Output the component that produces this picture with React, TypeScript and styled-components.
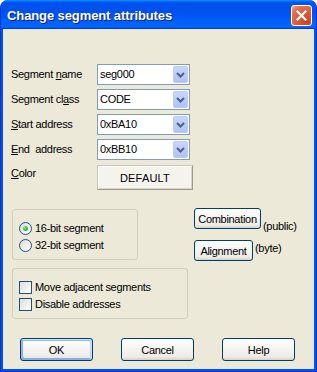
import React from 'react';
import styled, { createGlobalStyle } from 'styled-components';

const GlobalStyle = createGlobalStyle`
  html, body {
    margin: 0;
    padding: 0;
    background: #ffffff;
  }
  * {
    box-sizing: border-box;
  }
`;

const fields = [
  { key: 'name', pre: 'Segment ', hot: 'n', post: 'ame', value: 'seg000' },
  { key: 'class', pre: 'Segment cl', hot: 'a', post: 'ss', value: 'CODE' },
  { key: 'start', pre: '', hot: 'S', post: 'tart address', value: '0xBA10' },
  { key: 'end', pre: '', hot: 'E', post: 'nd\u00a0\u00a0address', value: '0xBB10' },
];

const App = () => {
  return (
    <>
      <GlobalStyle />
      <Window>
        <TitleBar>
          <TitleText>Change segment attributes</TitleText>
          <CloseButton>
            <svg width="11" height="11" viewBox="0 0 11 11">
              <path
                d="M1.5 1.5 L9.5 9.5 M9.5 1.5 L1.5 9.5"
                stroke="#ffffff"
                strokeWidth="2.2"
                strokeLinecap="square"
              />
            </svg>
          </CloseButton>
        </TitleBar>

        <Body>
          <FormGrid>
            {fields.map((f) => (
              <React.Fragment key={f.key}>
                <FieldLabel>
                  {f.pre}
                  <u>{f.hot}</u>
                  {f.post}
                </FieldLabel>
                <Combo>
                  <ComboValue>{f.value}</ComboValue>
                  <ComboArrow>
                    <svg width="9" height="6" viewBox="0 0 9 6">
                      <path
                        d="M1 1 L4.5 4.5 L8 1"
                        fill="none"
                        stroke="#4d6185"
                        strokeWidth="2"
                      />
                    </svg>
                  </ComboArrow>
                </Combo>
              </React.Fragment>
            ))}
            <FieldLabel $top>
              <u>C</u>olor
            </FieldLabel>
            <ColorButton>DEFAULT</ColorButton>
          </FormGrid>

          <LowerArea>
            <GroupBox $width={126}>
              <OptionRow>
                <RadioMark $checked />
                <OptionText>16-bit segment</OptionText>
              </OptionRow>
              <OptionRow>
                <RadioMark />
                <OptionText>32-bit segment</OptionText>
              </OptionRow>
            </GroupBox>

            <SideColumn>
              <SideRow>
                <SideButton $width={67}>Combination</SideButton>
                <SideNote $offset={12}>(public)</SideNote>
              </SideRow>
              <SideRow>
                <SideButton $width={59}>Alignment</SideButton>
                <SideNote $offset={2}>(byte)</SideNote>
              </SideRow>
            </SideColumn>

            <GroupBox $width={176}>
              <OptionRow>
                <CheckMark />
                <OptionText>
                  Move ad<u>j</u>acent segments
                </OptionText>
              </OptionRow>
              <OptionRow>
                <CheckMark />
                <OptionText>Disable addresses</OptionText>
              </OptionRow>
            </GroupBox>
          </LowerArea>

          <ButtonRow>
            <DialogButton $isDefault>OK</DialogButton>
            <DialogButton>Cancel</DialogButton>
            <DialogButton>Help</DialogButton>
          </ButtonRow>
        </Body>
      </Window>
    </>
  );
};

export default App;

const Window = styled.div`
  width: 317px;
  height: 372px;
  display: flex;
  flex-direction: column;
  background: #0055e5;
  border: 1px solid #0831d9;
  border-top: none;
  border-radius: 8px 8px 0 0;
  overflow: hidden;
  font-family: 'Liberation Sans', Arial, sans-serif;
  font-size: 11px;
  letter-spacing: -0.3px;
  color: #000000;
`;

const TitleBar = styled.div`
  height: 29px;
  flex: none;
  display: flex;
  align-items: center;
  justify-content: space-between;
  padding: 1px 4px 0 6px;
  background: linear-gradient(
    180deg,
    #0997ff 0%,
    #0053ee 8%,
    #0050ee 40%,
    #0066ff 88%,
    #0066ff 93%,
    #005bff 95%,
    #003dd7 96%,
    #003dd7 100%
  );
`;

const TitleText = styled.div`
  font-family: 'Liberation Sans', Arial, sans-serif;
  font-weight: bold;
  font-size: 13px;
  color: #ffffff;
  text-shadow: 1px 1px #0a1883;
  letter-spacing: -0.1px;
`;

const CloseButton = styled.div`
  width: 21px;
  height: 21px;
  display: flex;
  align-items: center;
  justify-content: center;
  border: 1px solid #ffffff;
  border-radius: 3px;
  background: radial-gradient(
    circle at 80% 85%,
    #c9441d 0%,
    #dc5a33 45%,
    #e4714f 75%,
    #f0a58c 100%
  );
`;

const Body = styled.div`
  flex: 1;
  margin: 0 2px 2px;
  background: #ece9d8;
  padding: 35px 0 0 8px;
  display: flex;
  flex-direction: column;
`;

const FormGrid = styled.div`
  display: grid;
  grid-template-columns: 86px 93px;
  grid-template-rows: repeat(4, 21px) 26px;
  row-gap: 4px;
  align-items: center;
`;

const FieldLabel = styled.div<{ $top?: boolean }>`
  line-height: 13px;
  white-space: nowrap;
  align-self: ${({ $top }) => ($top ? 'start' : 'center')};
  margin-top: ${({ $top }) => ($top ? '3px' : '0')};
`;

const Combo = styled.div`
  height: 21px;
  display: flex;
  align-items: center;
  justify-content: space-between;
  background: #ffffff;
  border: 1px solid #7f9db9;
  padding: 0 1px 0 2px;
`;

const ComboValue = styled.span`
  line-height: 13px;
`;

const ComboArrow = styled.div`
  width: 15px;
  height: 17px;
  display: flex;
  align-items: center;
  justify-content: center;
  border-radius: 2px;
  background: linear-gradient(180deg, #c6d6fc 0%, #b9cbf6 60%, #aec2f2 100%);
  border: 1px solid #bccdf6;
`;

const ColorButton = styled.div`
  width: 96px;
  height: 25px;
  margin-top: 1px;
  align-self: start;
  display: flex;
  align-items: center;
  justify-content: center;
  letter-spacing: 0.2px;
  background: #f4f3ee;
  border: 1px solid #c9c6b8;
  border-right-color: #9d9a8f;
  border-bottom-color: #9d9a8f;
  box-shadow: inset 1px 1px #ffffff, inset -1px -1px #d8d4c6;
`;

const LowerArea = styled.div`
  margin: 19px 0 0 1px;
  display: grid;
  grid-template-columns: 176px auto;
  column-gap: 6px;
  row-gap: 7px;
  align-items: start;
`;

const GroupBox = styled.div<{ $width: number }>`
  width: ${({ $width }) => $width}px;
  height: 51px;
  border: 1px solid #d0d0bf;
  border-radius: 3px;
  padding: 12px 0 0 6px;
  display: flex;
  flex-direction: column;
  gap: 4px;
`;

const OptionRow = styled.div`
  height: 13px;
  display: flex;
  align-items: center;
  gap: 3px;
`;

const OptionText = styled.span`
  line-height: 13px;
  white-space: nowrap;
`;

const RadioMark = styled.span<{ $checked?: boolean }>`
  width: 13px;
  height: 13px;
  flex: none;
  border-radius: 50%;
  border: 1px solid #1c5180;
  background: linear-gradient(135deg, #dcdcd7 0%, #ffffff 100%);
  display: flex;
  align-items: center;
  justify-content: center;

  &::after {
    content: '';
    display: ${({ $checked }) => ($checked ? 'block' : 'none')};
    width: 5px;
    height: 5px;
    border-radius: 50%;
    background: radial-gradient(circle at 35% 35%, #9de59d 0%, #3cbc3c 50%, #21a121 100%);
  }
`;

const CheckMark = styled.span`
  width: 13px;
  height: 13px;
  flex: none;
  border: 1px solid #1c5180;
  background: linear-gradient(135deg, #dcdcd7 0%, #ffffff 100%);
`;

const SideColumn = styled.div`
  margin-top: -1px;
  display: flex;
  flex-direction: column;
  gap: 7px;
`;

const SideRow = styled.div`
  display: flex;
  align-items: flex-start;
`;

const SideButton = styled.div<{ $width: number }>`
  width: ${({ $width }) => $width}px;
  height: 21px;
  display: flex;
  align-items: center;
  justify-content: center;
  border: 1px solid #003c74;
  border-radius: 3px;
  background: linear-gradient(180deg, #ffffff 0%, #ecebe6 86%, #d6d0c5 100%);
`;

const SideNote = styled.span<{ $offset: number }>`
  margin: ${({ $offset }) => $offset}px 0 0 2px;
  line-height: 13px;
`;

const ButtonRow = styled.div`
  margin: 19px 0 0 9px;
  display: flex;
  gap: 28px;
`;

const DialogButton = styled.div<{ $isDefault?: boolean }>`
  width: 73px;
  height: 23px;
  display: flex;
  align-items: center;
  justify-content: center;
  border: 1px solid #003c74;
  border-radius: 3px;
  background: linear-gradient(180deg, #ffffff 0%, #ecebe6 86%, #d6d0c5 100%);
  box-shadow: ${({ $isDefault }) =>
    $isDefault
      ? 'inset -1px 1px #cee7ff, inset 1px 2px #98b8ea, inset -2px 2px #bcd4f6, inset 1px -1px #89ade4, inset 2px -2px #89ade4'
      : 'none'};
`;
